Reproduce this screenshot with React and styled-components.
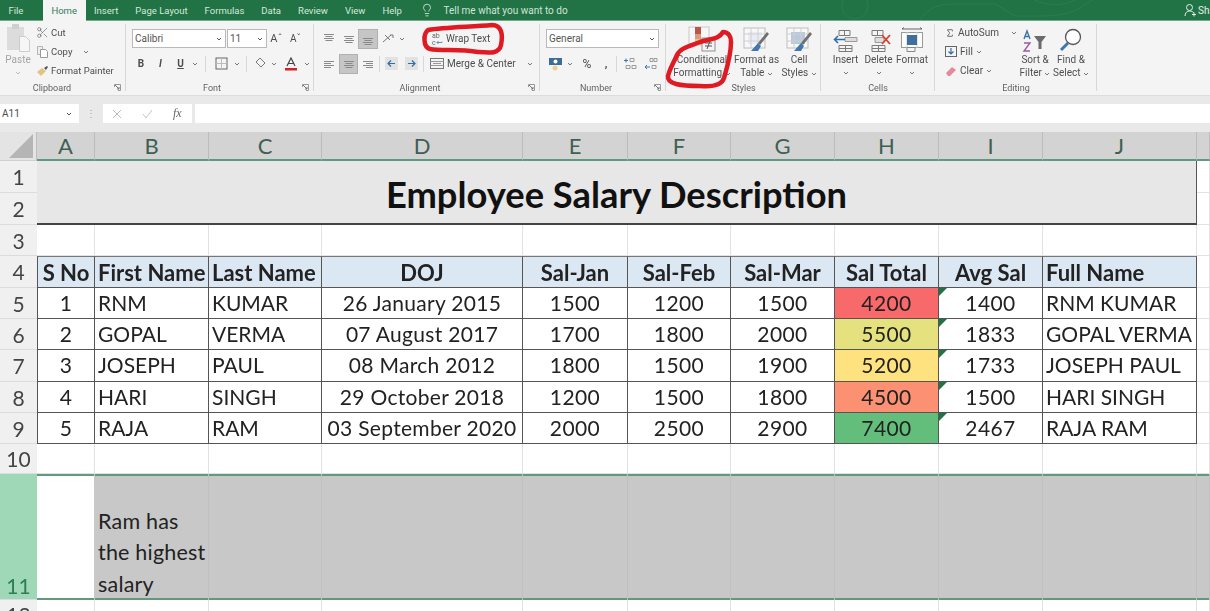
import React from 'react'
import styled, { createGlobalStyle, css } from 'styled-components'
import { Scissors, Lightbulb, Sigma } from 'lucide-react'

const GlobalStyle = createGlobalStyle`
  html, body { margin: 0; padding: 0; background: #fff; overflow: hidden; }
`

const Page = styled.div`
  position: relative;
  width: 1210px;
  height: 611px;
  overflow: hidden;
  font-family: Roboto, "Liberation Sans", sans-serif;
  color: #4d4d4d;
  filter: blur(0.35px);
`

/* title bar with tabs */
const TabBar = styled.div`
  position: relative;
  display: flex;
  align-items: stretch;
  height: 20px;
  background: #217346;
  border-bottom: 1px solid #6ea98a;
  font-size: 10px;
`
const Tab = styled.div`
  display: flex;
  align-items: center;
  padding: 0 8.5px;
  font-size: 9.5px;
  margin-right: ${p => p.$mr || 0}px;
  color: ${p => (p.$active ? '#2f7d57' : '#d5e8dc')};
  background: ${p => (p.$active ? '#f4f4f4' : 'transparent')};
  ${p => p.$active && css`margin-bottom: -1px;`}
`
const TellMe = styled.div`
  display: flex;
  align-items: center;
  gap: 9px;
  margin-left: 10px;
  color: #cfe4d7;
`
const Share = styled.div`
  position: absolute;
  left: 1184px;
  top: 0;
  height: 20px;
  display: flex;
  align-items: center;
  gap: 2px;
  color: #e4f0e9;
  white-space: nowrap;
`
const Circuit = styled.svg`
  position: absolute;
  left: 830px;
  top: 0;
`

/* ribbon */
const Ribbon = styled.div`
  display: flex;
  height: 74px;
  background: #f4f4f4;
  border-bottom: 1px solid #dcdcdc;
`
const Group = styled.section`
  position: relative;
  flex: 0 0 ${p => p.$w}px;
  box-sizing: border-box;
  display: flex;
  flex-direction: column;
  &::after {
    content: '';
    position: absolute;
    right: 0;
    top: 3px;
    bottom: 4px;
    width: 1px;
    background: #d8d8d8;
  }
`
const GroupBody = styled.div`
  flex: 1;
  display: flex;
  padding-top: ${p => p.$pt || 0}px;
  padding-left: ${p => p.$pl || 0}px;
`
const GroupLabel = styled.div`
  height: 14px;
  line-height: 14px;
  text-align: center;
  font-size: 9px;
  color: #626262;
  padding-right: ${p => p.$pr || 0}px;
`
const Launcher = styled.svg`
  position: absolute;
  right: 5px;
  bottom: 4px;
`
const Stack = styled.div`
  display: flex;
  flex-direction: column;
  gap: ${p => p.$gap || 0}px;
  width: ${p => (p.$w ? `${p.$w}px` : 'auto')};
  padding-left: ${p => p.$pl || 0}px;
  padding-top: ${p => p.$pt || 0}px;
  box-sizing: border-box;
`
const ToolRow = styled.div`
  display: flex;
  align-items: center;
  height: 19px;
  white-space: nowrap;
  font-size: ${p => p.$fs || 10}px;
  gap: ${p => p.$gap || 0}px;
  padding-left: ${p => p.$pl || 0}px;
`
const CaretGap = styled.span`
  display: inline-flex;
  margin-left: ${p => p.$m}px;
`
const IconCol = styled.span`
  flex: 0 0 ${p => p.$w}px;
  display: flex;
  align-items: center;
  justify-content: center;
  height: 19px;
  font-size: ${p => p.$fs || 10}px;
  font-weight: ${p => (p.$bold ? 700 : 400)};
  font-style: ${p => (p.$italic ? 'italic' : 'normal')};
  text-decoration: ${p => (p.$under ? 'underline' : 'none')};
  ${p => p.$active && css`
    background: #c6c6c6;
    border: 1px solid #b0b0b0;
    box-sizing: border-box;
    height: 20px;
  `}
`
const Divider = styled.span`
  flex: none;
  width: 1px;
  height: 16px;
  background: #d8d8d8;
  margin: 0 ${p => p.$m || 3}px;
`
const Combo = styled.div`
  box-sizing: border-box;
  width: ${p => p.$w}px;
  height: 19px;
  margin-right: ${p => p.$mr || 0}px;
  background: #fff;
  border: 1px solid #b9b9b9;
  display: flex;
  align-items: center;
  justify-content: space-between;
  padding: 0 3px 0 2px;
  font-size: 10px;
  color: #555;
`
const LargeButton = styled.div`
  flex: 0 0 ${p => p.$w}px;
  display: flex;
  flex-direction: column;
  align-items: center;
`
const LargeIcon = styled.div`
  height: 32px;
  display: flex;
  align-items: flex-end;
  justify-content: center;
`
const LargeText = styled.div`
  font-size: 10px;
  line-height: 13px;
  text-align: center;
  white-space: nowrap;
  color: ${p => (p.$dim ? '#a5a5a5' : '#505050')};
`
const Caret = ({ c = '#777' }) => (
  <svg width="6" height="4" viewBox="0 0 6 4"><path d="M1 1l2 2 2-2" fill="none" stroke={c} strokeWidth="1" /></svg>
)
const CaretLine = styled.div`
  height: 13px;
  display: flex;
  align-items: center;
  justify-content: center;
`

/* formula bar */
const FormulaBar = styled.div`
  display: flex;
  align-items: stretch;
  height: 36px;
  box-sizing: border-box;
  padding: 8px 0 9px;
  background: #e9e9e9;
  font-size: 10px;
`
const NameBox = styled.div`
  width: 79px;
  background: #fff;
  display: flex;
  align-items: center;
  justify-content: space-between;
  padding: 0 7px 0 2px;
  box-sizing: border-box;
`
const Dots = styled.div`
  width: 24px;
  display: flex;
  align-items: center;
  justify-content: center;
  color: #aaa;
`
const FnBox = styled.div`
  width: 89px;
  margin-right: 3px;
  background: #fff;
  display: flex;
  align-items: center;
  padding-left: 9px;
  gap: 20px;
  box-sizing: border-box;
  color: #999;
`
const FxText = styled.span`
  font-family: "Liberation Serif", serif;
  font-style: italic;
  font-size: 12px;
  color: #666;
`
const FormulaInput = styled.div`
  flex: 1;
  background: #fff;
`

/* sheet */
const Sheet = styled.div`
  display: grid;
  grid-template-columns: 37px 58px 114px 113px 201px 105px 103px 104px 104px 104px 154px 13px;
  grid-template-rows: 29px 32px 32px 31px 32px 31px 31px 32px 31px 31px 30px 126px 12px;
  font-family: Lato, "Liberation Sans", sans-serif;
  font-size: 21px;
  color: #222;
`
const Corner = styled.div`
  background: #e4e4e4;
  border-right: 1px solid #bdbdbd;
  border-bottom: 1px solid #cfcfcf;
  box-sizing: border-box;
  display: flex;
  align-items: flex-end;
  justify-content: flex-end;
  padding: 0 2px 1px 0;
`
const ColHead = styled.div`
  background: #d3d3d3;
  border-right: 1px solid #bcbcbc;
  border-bottom: 2px solid #5f9a7f;
  box-sizing: border-box;
  display: flex;
  align-items: center;
  justify-content: center;
  font-size: 22px;
  color: #3f5f52;
`
const RowHead = styled.div`
  box-sizing: border-box;
  display: flex;
  justify-content: center;
  align-items: ${p => (p.$selected ? 'flex-end' : 'center')};
  background: ${p => (p.$selected ? '#9fd8b6' : '#f0f0f0')};
  color: ${p => (p.$selected ? '#2f7d57' : '#444')};
  border-bottom: 1px solid #dcdcdc;
  font-size: 21px;
  overflow: hidden;
  ${p => p.$clip && css`align-items: flex-start; padding-top: 2px;`}
  ${p => p.$selected && css`padding-bottom: 1px;`}
`
const Cell = styled.div`
  position: relative;
  box-sizing: border-box;
  display: flex;
  align-items: center;
  overflow: hidden;
  white-space: nowrap;
  padding: 0 3px ${p => (p.$bold ? 0 : 2)}px;
  background: ${p => p.$bg || '#fff'};
  justify-content: ${p => (p.$left ? 'flex-start' : 'center')};
  font-weight: ${p => (p.$bold ? 700 : 400)};
  font-size: ${p => (p.$bold ? '22px' : 'inherit')};
  letter-spacing: ${p => p.$track || 0}px;
  border-right: 1px solid ${p => (p.$table ? '#555' : '#e2e2e2')};
  border-bottom: 1px solid ${p => (p.$table ? '#555' : '#e2e2e2')};
  ${p => p.$first && css`border-left: 1px solid #555;`}
  ${p => p.$top && css`border-top: 1px solid #777;`}
  ${p => p.$comment && css`
    &::before {
      content: '';
      position: absolute;
      left: 0;
      top: 0;
      border-top: 8px solid #217346;
      border-right: 8px solid transparent;
    }
  `}
`
const TitleCell = styled.div`
  grid-column: 2 / span 10;
  grid-row: 2 / span 2;
  display: flex;
  align-items: center;
  justify-content: center;
  padding-top: 3px;
  background: #e7e7e7;
  border-right: 1px solid #555;
  border-bottom: 2px solid #444;
  box-sizing: border-box;
  font-size: 36.3px;
  font-weight: 700;
  color: #111;
`
const SelectedCell = styled.div`
  box-sizing: border-box;
  display: flex;
  align-items: flex-end;
  padding: 0 3px;
  font-size: 21.5px;
  white-space: nowrap;
  background: ${p => (p.$active ? '#fff' : '#c8c8c8')};
  box-shadow: inset 0 2px 0 #5f9a7f, inset 0 -2px 0 #5f9a7f;
  border-right: 1px solid ${p => (p.$active ? '#c8c8c8' : '#c0c0c0')};
  line-height: 31.5px;
`
const WrappedText = styled.div`
  letter-spacing: 0.2px;
`

/* pen marks over the ribbon */
const Marks = styled.svg`
  position: absolute;
  left: 0;
  top: 0;
  pointer-events: none;
`

const Glyph = ({ w = 14, h = 14, children }) => (
  <svg width={w} height={h} viewBox={`0 0 ${w} ${h}`} fill="none" style={{ flex: 'none' }}>{children}</svg>
)

const AlignBars = ({ rows, anchor }) => {
  const widths = [10, 7, 10, 7]
  return (
    <Glyph w={12} h={14}>
      {widths.map((bw, i) => {
        const x = anchor === 'left' ? 1 : anchor === 'right' ? 11 - bw : 6 - bw / 2
        return <rect key={i} x={x} y={rows + i * 2} width={bw} height="1" fill="#8a8a8a" />
      })}
    </Glyph>
  )
}

const launcher = (
  <Launcher width="7" height="7" viewBox="0 0 7 7" fill="none">
    <path d="M.5 3V.5H6.5V6.5H4" stroke="#999" />
    <path d="M1 1l4 4M3 5h2V3" stroke="#777" />
  </Launcher>
)

const columns = ['A', 'B', 'C', 'D', 'E', 'F', 'G', 'H', 'I', 'J']
const headers = ['S No', 'First Name', 'Last Name', 'DOJ', 'Sal-Jan', 'Sal-Feb', 'Sal-Mar', 'Sal Total', 'Avg Sal', 'Full Name']
const employees = [
  ['1', 'RNM', 'KUMAR', '26 January 2015', '1500', '1200', '1500', '4200', '1400', 'RNM KUMAR', '#f8696b'],
  ['2', 'GOPAL', 'VERMA', '07 August 2017', '1700', '1800', '2000', '5500', '1833', 'GOPAL VERMA', '#e6e17f'],
  ['3', 'JOSEPH', 'PAUL', '08 March 2012', '1800', '1500', '1900', '5200', '1733', 'JOSEPH PAUL', '#fde27f'],
  ['4', 'HARI', 'SINGH', '29 October 2018', '1200', '1500', '1800', '4500', '1500', 'HARI SINGH', '#fb9072'],
  ['5', 'RAJA', 'RAM', '03 September 2020', '2000', '2500', '2900', '7400', '2467', 'RAJA RAM', '#63be7b'],
]
const leftAligned = [1, 2, 9]
const trackFor = i => (i === 3 ? 0.3 : leftAligned.includes(i) ? 0 : 0.4)

function ClipboardGroup() {
  return (
    <Group $w={126}>
      <GroupBody>
        <LargeButton $w={36}>
          <LargeIcon>
            <Glyph w={26} h={30}>
              <rect x="2" y="4" width="17" height="23" fill="#dcdcdc" />
              <rect x="7" y="1" width="7" height="5" fill="#cfcfcf" />
              <path d="M14.5 13.5h6l4 4v11h-10z" fill="#f6f6f6" stroke="#cdcdcd" />
            </Glyph>
          </LargeIcon>
          <LargeText $dim>Paste</LargeText>
          <CaretLine><Caret c="#bbb" /></CaretLine>
        </LargeButton>
        <Stack $pt={2}>
          <ToolRow $gap={2} $fs={9.5}><Scissors size={13} strokeWidth={1.2} color="#666" />Cut</ToolRow>
          <ToolRow $gap={2} $fs={9.5}>
            <Glyph w={13} h={13}>
              <path d="M1.5 1.5h5v8h-5z" stroke="#b5b5b5" fill="#eee" />
              <path d="M4.5 4.5h5l2 2v6h-7z" stroke="#999" fill="#fff" />
            </Glyph>
            Copy <CaretGap $m={9}><Caret /></CaretGap>
          </ToolRow>
          <ToolRow $gap={2} $fs={9.5}>
            <Glyph w={13} h={13}>
              <path d="M1 8l5-4 4 3-5 5z" fill="#e3c47e" />
              <path d="M8 4l3-2 1 1-2 3z" fill="#555" />
            </Glyph>
            Format Painter
          </ToolRow>
        </Stack>
      </GroupBody>
      <GroupLabel $pr={22}>Clipboard</GroupLabel>
      {launcher}
    </Group>
  )
}

function FontGroup() {
  return (
    <Group $w={188}>
      <GroupBody $pt={8} $pl={6}>
        <Stack $gap={6}>
          <ToolRow>
            <Combo $w={94} $mr={1}>Calibri <Caret c="#555" /></Combo>
            <Combo $w={40}>11 <Caret c="#555" /></Combo>
            <IconCol $w={19} $fs={11}>Aˆ</IconCol>
            <IconCol $w={19} $fs={10}>Aˇ</IconCol>
          </ToolRow>
          <ToolRow>
            <IconCol $w={18} $bold>B</IconCol>
            <IconCol $w={21} $bold $italic>I</IconCol>
            <IconCol $w={19} $bold $under>U</IconCol>
            <IconCol $w={10}><Caret /></IconCol>
            <Divider $m={5} />
            <IconCol $w={20}>
              <Glyph w={13} h={13}>
                <rect x="1" y="1" width="11" height="11" stroke="#666" />
                <path d="M6.5 1v11M1 6.5h11" stroke="#bbb" />
              </Glyph>
            </IconCol>
            <IconCol $w={12}><Caret /></IconCol>
            <Divider />
            <IconCol $w={20}>
              <Glyph w={13} h={13}>
                <path d="M6 1l5 5-4 4-5-5z" stroke="#777" />
                <path d="M3 10h7v2H3z" fill="#eee" />
              </Glyph>
            </IconCol>
            <IconCol $w={8}><Caret /></IconCol>
            <IconCol $w={26}>
              <Glyph w={14} h={14}>
                <path d="M3 9l4-8 4 8M4.5 6.5h5" stroke="#444" strokeWidth="1.2" />
                <rect x="1" y="11" width="12" height="2.5" fill="#d6202a" />
              </Glyph>
            </IconCol>
            <IconCol $w={6}><Caret /></IconCol>
          </ToolRow>
        </Stack>
      </GroupBody>
      <GroupLabel $pr={16}>Font</GroupLabel>
      {launcher}
    </Group>
  )
}

function AlignmentGroup() {
  return (
    <Group $w={226}>
      <GroupBody $pt={8} $pl={5}>
        <Stack $gap={6} $w={111}>
          <ToolRow>
            <IconCol $w={20}><AlignBars rows={2} /></IconCol>
            <IconCol $w={19}><AlignBars rows={4} /></IconCol>
            <IconCol $w={20} $active><AlignBars rows={6} /></IconCol>
            <IconCol $w={30}>
              <Glyph w={14} h={14}>
                <path d="M2 10l8-7M4 3l5 5M9 3h3v3" stroke="#777" />
              </Glyph>
              <CaretGap $m={4}><Caret /></CaretGap>
            </IconCol>
          </ToolRow>
          <ToolRow>
            <IconCol $w={20}><AlignBars rows={4} anchor="left" /></IconCol>
            <IconCol $w={19} $active><AlignBars rows={4} /></IconCol>
            <IconCol $w={20}><AlignBars rows={4} anchor="right" /></IconCol>
            <Divider $m={1} />
            <IconCol $w={20}>
              <Glyph w={13} h={13}>
                <rect width="13" height="13" fill="#e2e2e2" />
                <path d="M10 6.5H3M6 3.5l-3 3 3 3" stroke="#2f6ea8" strokeWidth="1.2" />
              </Glyph>
            </IconCol>
            <IconCol $w={20}>
              <Glyph w={13} h={13}>
                <rect width="13" height="13" fill="#e2e2e2" />
                <path d="M3 6.5h7M7 3.5l3 3-3 3" stroke="#2f6ea8" strokeWidth="1.2" />
              </Glyph>
            </IconCol>
            <Divider $m={2} />
          </ToolRow>
        </Stack>
        <Stack $gap={6}>
          <ToolRow $gap={3} $pl={1}>
            <Glyph w={12} h={14}>
              <text x="1" y="6" fontSize="7" fill="#666" fontFamily="Roboto, sans-serif">ab</text>
              <text x="1" y="13" fontSize="7" fill="#666" fontFamily="Roboto, sans-serif">c</text>
              <path d="M6 10.5h5v-1M6 10.5l1.5-1.5M6 10.5L7.5 12" stroke="#3a78ad" strokeWidth=".8" />
            </Glyph>
            Wrap Text
          </ToolRow>
          <ToolRow $gap={3}>
            <Glyph w={14} h={13}>
              <rect x=".5" y="1.5" width="13" height="10" stroke="#777" />
              <path d="M.5 4.5h13M.5 8.5h13M3 6.5h8" stroke="#999" />
            </Glyph>
            Merge &amp; Center
            <CaretGap $m={8}><Caret /></CaretGap>
          </ToolRow>
        </Stack>
      </GroupBody>
      <GroupLabel $pr={14}>Alignment</GroupLabel>
      {launcher}
    </Group>
  )
}

function NumberGroup() {
  return (
    <Group $w={126}>
      <GroupBody $pt={8} $pl={6}>
        <Stack $gap={6}>
          <Combo $w={113}>General <Caret c="#555" /></Combo>
          <ToolRow>
            <IconCol $w={18}>
              <Glyph w={15} h={14}>
                <rect x="1" y="1" width="13" height="7" fill="#3b6d96" />
                <circle cx="7.5" cy="4.5" r="2" fill="#fff" />
                <circle cx="7" cy="11" r="2.5" fill="#eccf92" />
              </Glyph>
            </IconCol>
            <IconCol $w={12}><Caret /></IconCol>
            <IconCol $w={22} $fs={12}>%</IconCol>
            <IconCol $w={16} $bold $fs={11}>,</IconCol>
            <Divider $m={2} />
            <IconCol $w={22}>
              <Glyph w={14} h={13}>
                <path d="M1 3.5h4M3 1.5v4" stroke="#3a78ad" />
                <path d="M7 1.5h4v3H7zM3 8.5h4v3H3zM9 8.5h4v3H9z" stroke="#888" strokeWidth=".8" />
              </Glyph>
            </IconCol>
            <IconCol $w={20}>
              <Glyph w={14} h={13}>
                <path d="M6 1.5h3v3H6zM10 1.5h3v3h-3zM8 8.5h4v3H8z" stroke="#888" strokeWidth=".8" />
                <path d="M1 10h5M3 8l-2 2 2 2" stroke="#3a78ad" />
              </Glyph>
            </IconCol>
          </ToolRow>
        </Stack>
      </GroupBody>
      <GroupLabel $pr={14}>Number</GroupLabel>
      {launcher}
    </Group>
  )
}

const TableBrush = ({ tint }) => (
  <Glyph w={27} h={26}>
    <rect x="1" y="1" width="21" height="20" fill="#f8f8f8" stroke="#bdbdbd" />
    <rect x="5" y="5" width="14" height="12" fill={tint} />
    <path d="M8 1v20M15 1v20M1 7h21M1 14h21" stroke="#cfcfcf" />
    <path d="M26 7l-9 11-2-2 9-11z" fill="#6f6f6f" />
    <path d="M15 16l3 3-3 5H8z" fill="#3f77ae" />
  </Glyph>
)

function StylesGroup() {
  return (
    <Group $w={155}>
      <GroupBody $pl={4}>
        <LargeButton $w={64}>
          <LargeIcon>
            <Glyph w={30} h={28}>
              <rect x="2" y="2" width="20" height="18" fill="#f7f7f7" stroke="#c8c8c8" />
              <rect x="8" y="2" width="6" height="7" fill="#b9574a" />
              <rect x="8" y="9" width="6" height="5" fill="#d99a80" />
              <rect x="8" y="14" width="6" height="6" fill="#e8c48a" />
              <rect x="15" y="13" width="13" height="13" fill="#f4f4f4" stroke="#8f8f8f" />
              <path d="M18 18h7M18 21h7M23 16l-3 8" stroke="#555" />
            </Glyph>
          </LargeIcon>
          <LargeText>Conditional<br />Formatting <Caret /></LargeText>
        </LargeButton>
        <LargeButton $w={42}>
          <LargeIcon><TableBrush tint="#e9edf3" /></LargeIcon>
          <LargeText>Format as<br />Table <Caret /></LargeText>
        </LargeButton>
        <LargeButton $w={40}>
          <LargeIcon><TableBrush tint="#b9c8dc" /></LargeIcon>
          <LargeText>Cell<br />Styles <Caret /></LargeText>
        </LargeButton>
      </GroupBody>
      <GroupLabel>Styles</GroupLabel>
    </Group>
  )
}

const CellsGrid = ({ children }) => (
  <Glyph w={26} h={24}>
    <path d="M6 1.5h11v5H6zM11.5 1.5v5M6 16.5h13v6H6zM12.5 16.5v6M6 19.5h13" stroke="#7b7b7b" />
    {children}
  </Glyph>
)

function CellsGroup() {
  return (
    <Group $w={114}>
      <GroupBody $pl={8}>
        <LargeButton $w={33}>
          <LargeIcon>
            <CellsGrid>
              <path d="M12 8.5h12v4H12z" stroke="#9a9a9a" fill="#ddd" />
              <path d="M12 10.5H2M5 7l-3.5 3.5L5 14" stroke="#2f6ea8" strokeWidth="1.6" />
            </CellsGrid>
          </LargeIcon>
          <LargeText>Insert</LargeText>
          <CaretLine><Caret /></CaretLine>
        </LargeButton>
        <LargeButton $w={33}>
          <LargeIcon>
            <CellsGrid>
              <path d="M9 8.5h9v5H9z" stroke="#9a9a9a" fill="#ddd" />
              <path d="M16 6l8 9M24 6l-8 9" stroke="#d8402e" strokeWidth="1.8" />
            </CellsGrid>
          </LargeIcon>
          <LargeText>Delete</LargeText>
          <CaretLine><Caret /></CaretLine>
        </LargeButton>
        <LargeButton $w={34}>
          <LargeIcon>
            <Glyph w={24} h={26}>
              <path d="M2 2h20M2 2l2-1.5M22 2l-2-1.5" stroke="#666" />
              <rect x="1.5" y="5.5" width="21" height="15" fill="#fff" stroke="#9a9a9a" />
              <path d="M7 5v16M17 5v16" stroke="#ccc" />
              <rect x="7" y="8" width="10" height="10" fill="#3f6f9f" />
              <path d="M7 20.5h8v4H7z" stroke="#888" />
            </Glyph>
          </LargeIcon>
          <LargeText>Format</LargeText>
          <CaretLine><Caret /></CaretLine>
        </LargeButton>
      </GroupBody>
      <GroupLabel>Cells</GroupLabel>
    </Group>
  )
}

function EditingGroup() {
  return (
    <Group $w={162}>
      <GroupBody>
        <Stack $pt={2} $pl={10} $w={82}>
          <ToolRow $gap={3}>
            <Sigma size={12} strokeWidth={1.8} color="#444" />AutoSum
            <CaretGap $m={9}><Caret /></CaretGap>
          </ToolRow>
          <ToolRow $gap={3}>
            <Glyph w={12} h={13}>
              <rect x=".5" y="1.5" width="11" height="10" stroke="#666" />
              <path d="M6 3v6M3.5 6.5L6 9l2.5-2.5" stroke="#2f6ea8" strokeWidth="1.2" />
            </Glyph>
            Fill <Caret />
          </ToolRow>
          <ToolRow $gap={3}>
            <Glyph w={12} h={12}>
              <path d="M1 8l6-6 4 3-6 6H3z" fill="#e58a9a" />
            </Glyph>
            Clear <Caret />
          </ToolRow>
        </Stack>
        <LargeButton $w={36}>
          <LargeIcon>
            <Glyph w={26} h={24}>
              <path d="M2 10l3-8 3 8M3 7.5h4" stroke="#3c74a8" strokeWidth="1.4" />
              <path d="M2 14h6l-6 8h6" stroke="#9a5aa5" strokeWidth="1.4" />
              <path d="M12 7h12l-4.5 6v7h-3v-7z" fill="#6b6b6b" />
            </Glyph>
          </LargeIcon>
          <LargeText>Sort &amp;<br />Filter <Caret /></LargeText>
        </LargeButton>
        <LargeButton $w={36}>
          <LargeIcon>
            <Glyph w={24} h={26}>
              <circle cx="14" cy="10" r="7.5" stroke="#555" strokeWidth="1.3" fill="#fff" />
              <path d="M9 16L2 23" stroke="#3f77ae" strokeWidth="3" />
            </Glyph>
          </LargeIcon>
          <LargeText>Find &amp;<br />Select <Caret /></LargeText>
        </LargeButton>
      </GroupBody>
      <GroupLabel>Editing</GroupLabel>
    </Group>
  )
}

export default function App() {
  return (
    <Page>
      <GlobalStyle />
      <TabBar>
        <Tab $mr={11}>File</Tab>
        <Tab $active>Home</Tab>
        {['Insert', 'Page Layout', 'Formulas', 'Data', 'Review', 'View', 'Help'].map(t => <Tab key={t}>{t}</Tab>)}
        <TellMe>
          <Lightbulb size={14} strokeWidth={1.4} color="#dcebe2" />
          Tell me what you want to do
        </TellMe>
        <Circuit width="330" height="20" fill="none" stroke="#2a7d50" strokeWidth="1">
          <circle cx="25" cy="6" r="13" />
          <path d="M90 20 C100 6 110 4 125 4 H165 L185 16 H210 C220 16 235 16 250 8 L262 0" />
          <path d="M205 0 C215 6 235 6 245 0" />
        </Circuit>
        <Share>
          <Glyph w={12} h={14}>
            <circle cx="5.5" cy="4.5" r="3" stroke="#e4f0e9" />
            <path d="M1 13c0-3 2-5 4.5-5S9 9 10 10M8 11.5h4M10 9.5v4" stroke="#e4f0e9" />
          </Glyph>
          Share
        </Share>
      </TabBar>

      <Ribbon>
        <ClipboardGroup />
        <FontGroup />
        <AlignmentGroup />
        <NumberGroup />
        <StylesGroup />
        <CellsGroup />
        <EditingGroup />
      </Ribbon>

      <FormulaBar>
        <NameBox>A11 <Caret c="#555" /></NameBox>
        <Dots>⋮</Dots>
        <FnBox>
          <Glyph w={10} h={10}><path d="M1 1l8 8M9 1L1 9" stroke="#bbb" /></Glyph>
          <Glyph w={11} h={10}><path d="M1 5l3 4 6-8" stroke="#c5c5c5" /></Glyph>
          <FxText>fx</FxText>
        </FnBox>
        <FormulaInput />
      </FormulaBar>

      <Sheet>
        <Corner>
          <Glyph w={26} h={26}><path d="M25 1v24H1z" fill="#b5b5b5" /></Glyph>
        </Corner>
        {columns.map(c => <ColHead key={c}>{c}</ColHead>)}
        <ColHead />

        <RowHead>1</RowHead>
        <TitleCell>Employee Salary Description</TitleCell>
        <Cell />
        <RowHead>2</RowHead>
        <Cell />

        <RowHead>3</RowHead>
        {columns.map(c => <Cell key={c} />)}
        <Cell />

        <RowHead>4</RowHead>
        {headers.map((h, i) => (
          <Cell key={h} $table $bold $top $first={i === 0} $bg="#dbe7f3" $left={leftAligned.includes(i)}>{h}</Cell>
        ))}
        <Cell />

        {employees.map((row, r) => (
          <React.Fragment key={row[0]}>
            <RowHead>{r + 5}</RowHead>
            {row.slice(0, 10).map((v, i) => (
              <Cell
                key={i}
                $table
                $first={i === 0}
                $left={leftAligned.includes(i)}
                $track={trackFor(i)}
                $bg={i === 7 ? row[10] : undefined}
                $comment={i === 8}
              >
                {v}
              </Cell>
            ))}
            <Cell />
          </React.Fragment>
        ))}

        <RowHead>10</RowHead>
        {columns.map(c => <Cell key={c} />)}
        <Cell />

        <RowHead $selected>11</RowHead>
        <SelectedCell $active />
        <SelectedCell>
          <WrappedText>Ram has<br />the highest<br />salary</WrappedText>
        </SelectedCell>
        {columns.slice(2).map(c => <SelectedCell key={c} />)}
        <SelectedCell />

        <RowHead $clip>12</RowHead>
        {columns.map(c => <Cell key={c} />)}
        <Cell />
      </Sheet>

      <Marks width="1210" height="611" fill="none" stroke="#e01a22" strokeWidth="4.5" strokeLinejoin="round">
        <path d="M428 30C445 27 470 27 492 25C502 25 503 35 501 45C499 54 490 53 478 52C460 49 440 51 430 49C423 47 423 34 428 30Z" />
        <path d="M723 32C718 40 712 38 700 42C690 46 680 48 677 55C674 62 670 68 668 76C667 84 680 86 700 86C712 87 722 85 724 78C727 68 731 55 731 42C731 36 728 32 723 32Z" />
      </Marks>
    </Page>
  )
}
